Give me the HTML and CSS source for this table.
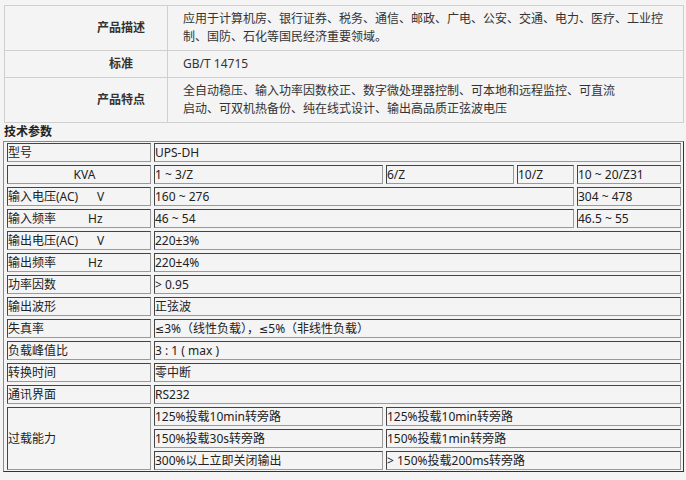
FILE: index.html
```html
<!DOCTYPE html>
<html lang="zh-CN">
<head>
<meta charset="utf-8">
<title>UPS-DH 产品参数</title>
<link rel="stylesheet" href="styles.css">
</head>
<body>
<div class="page">
  <table class="info">
    <tr>
      <th>产品描述</th>
      <td>应用于计算机房、银行证券、税务、通信、邮政、广电、公安、交通、电力、医疗、工业控<br>制、国防、石化等国民经济重要领域。</td>
    </tr>
    <tr>
      <th>标准</th>
      <td>GB/T 14715</td>
    </tr>
    <tr>
      <th>产品特点</th>
      <td>全自动稳压、输入功率因数校正、数字微处理器控制、可本地和远程监控、可直流<br>启动、可双机热备份、纯在线式设计、输出高品质正弦波电压</td>
    </tr>
  </table>

  <h2 class="heading">技术参数</h2>

  <div class="specs">
    <div class="cell">型号</div>
    <div class="cell span4">UPS-DH</div>

    <div class="cell kva">KVA</div>
    <div class="cell">1 ~ 3/Z</div>
    <div class="cell">6/Z</div>
    <div class="cell">10/Z</div>
    <div class="cell">10 ~ 20/Z31</div>

    <div class="cell"><span class="lab-v">输入电压(AC)</span>V</div>
    <div class="cell span3">160 ~ 276</div>
    <div class="cell">304 ~ 478</div>

    <div class="cell"><span class="lab-hz">输入频率</span>Hz</div>
    <div class="cell span3">46 ~ 54</div>
    <div class="cell">46.5 ~ 55</div>

    <div class="cell"><span class="lab-v">输出电压(AC)</span>V</div>
    <div class="cell span4">220±3%</div>

    <div class="cell"><span class="lab-hz">输出频率</span>Hz</div>
    <div class="cell span4">220±4%</div>

    <div class="cell">功率因数</div>
    <div class="cell span4">&gt; 0.95</div>

    <div class="cell">输出波形</div>
    <div class="cell span4">正弦波</div>

    <div class="cell">失真率</div>
    <div class="cell span4"><span class="sym">≤</span>3%（线性负载），<span class="sym">≤</span>5%（非线性负载）</div>

    <div class="cell">负载峰值比</div>
    <div class="cell span4">3 : 1 ( max )</div>

    <div class="cell">转换时间</div>
    <div class="cell span4">零中断</div>

    <div class="cell">通讯界面</div>
    <div class="cell span4">RS232</div>

    <div class="cell rows3">过载能力</div>
    <div class="cell">125%投载10min转旁路</div>
    <div class="cell span3">125%投载10min转旁路</div>
    <div class="cell">150%投载30s转旁路</div>
    <div class="cell span3">150%投载1min转旁路</div>
    <div class="cell">300%以上立即关闭输出</div>
    <div class="cell span3">&gt; 150%投载200ms转旁路</div>
  </div>
</div>
</body>
</html>
```

FILE: styles.css
```css
html, body {
  margin: 0;
  padding: 0;
  background: #f4f4f4;
}

body {
  font-family: "Noto Sans", "Noto Sans CJK SC", sans-serif;
  font-size: 12px;
  color: #333;
}

.page {
  padding: 5px 0 0 3px;
}

.info {
  margin-left: 1px;
  width: 680px;
  border-collapse: collapse;
  border: 1px solid #cfcfcf;
  background: #f4f4f4;
}

.info th,
.info td {
  border: 1px solid #cfcfcf;
  padding: 4px 0;
  line-height: 18px;
  vertical-align: middle;
}

.info th {
  width: 92px;
  padding-left: 70px;
  text-align: center;
  font-weight: bold;
  color: #333;
}

.info td {
  padding-left: 15px;
  padding-right: 4px;
  text-align: left;
  color: #333;
}

.heading {
  margin: 0;
  padding-left: 1px;
  font-size: 12px;
  font-weight: bold;
  line-height: 18px;
  color: #222;
}

.specs {
  display: grid;
  grid-template-columns: 144px 229px 128px 57px 104px;
  grid-auto-rows: 19px;
  gap: 3px;
  width: 674px;
  padding: 1px 2px 1px 3px;
  border: 1px solid;
  border-color: #8a8a8a #333 #333 #8a8a8a;
  color: #222;
}

.cell {
  box-sizing: border-box;
  border: 1px solid;
  border-color: #444 #9a9a9a #9a9a9a #444;
  background: #f4f4f4;
  line-height: 17px;
  white-space: nowrap;
  overflow: hidden;
}

.sym {
  font-family: "DejaVu Sans", sans-serif;
  font-size: 11px;
}

.span3 { grid-column: span 3; }
.span4 { grid-column: span 4; }

.rows3 {
  grid-row: span 3;
  display: flex;
  align-items: center;
}

.kva {
  text-align: center;
  padding-left: 11px;
}

.lab-v {
  display: inline-block;
  width: 89px;
}

.lab-hz {
  display: inline-block;
  width: 80px;
}
```
